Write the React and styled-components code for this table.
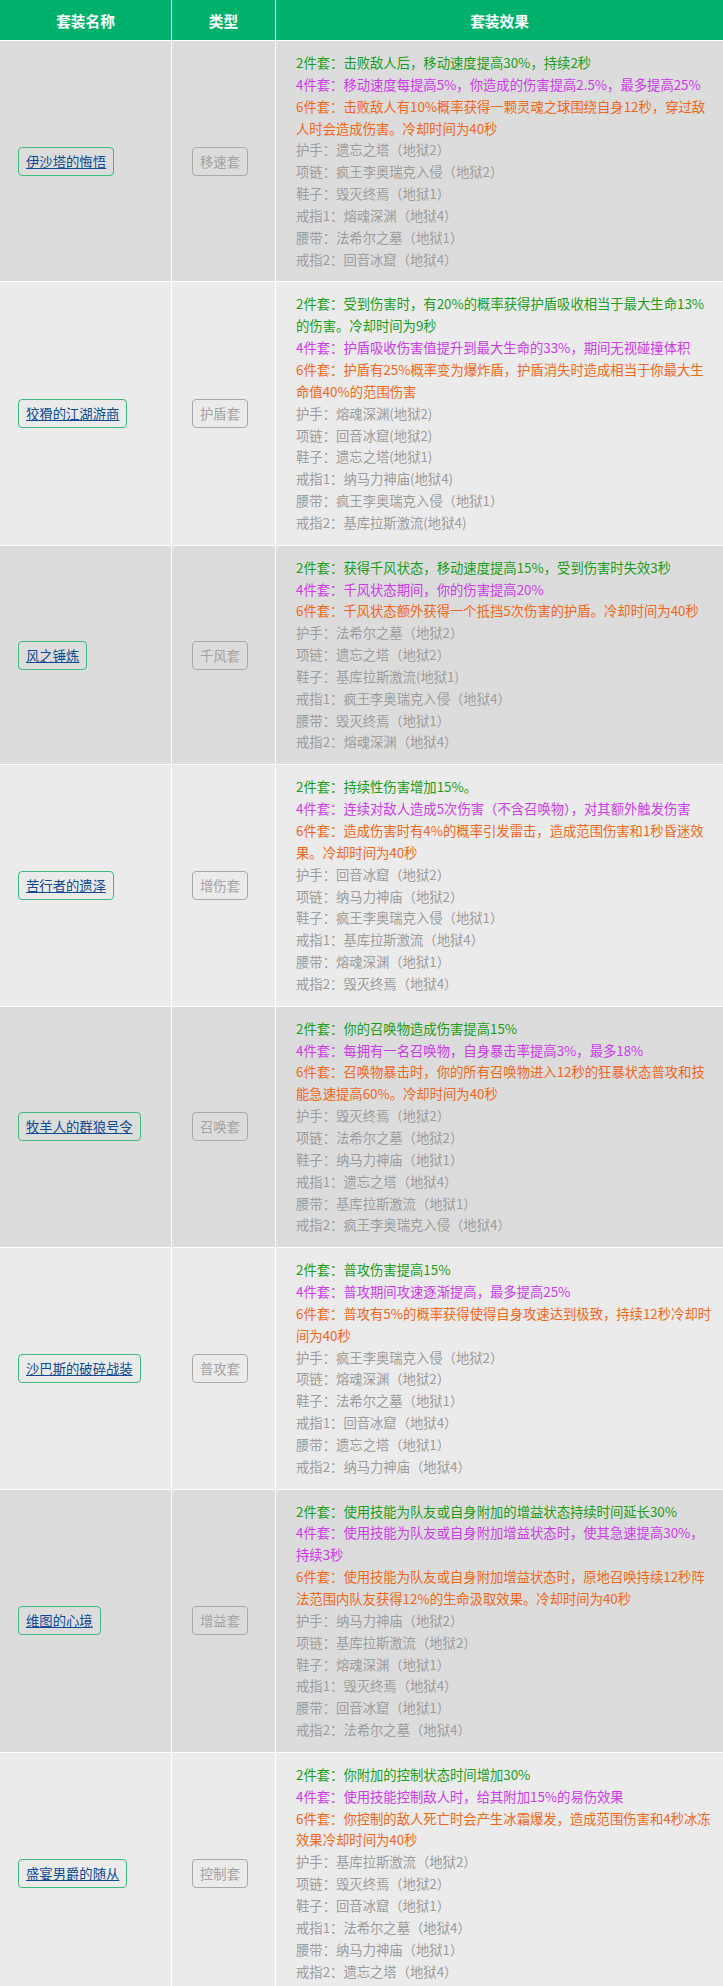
import React from "react";
import styled, { createGlobalStyle } from "styled-components";

const GlobalStyle = createGlobalStyle`
  html, body { margin: 0; padding: 0; background: #ffffff; }
  body {
    font-family: "Noto Sans CJK SC", "Microsoft YaHei", "Noto Sans", sans-serif;
    font-size: 13.33px;
  }
`;

const Table = styled.div`
  width: 723px;
  display: flex;
  flex-direction: column;
  gap: 1px;
  background: #ffffff;
`;

const RowGrid = styled.div`
  display: grid;
  grid-template-columns: 171px 103px 1fr;
  column-gap: 1px;
  background: #ffffff;
`;

const HeadCell = styled.div`
  height: 40px;
  background: #00b16b;
  color: #ffffff;
  font-weight: 700;
  font-size: 14.67px;
  display: flex;
  align-items: center;
  justify-content: center;
`;

const Cell = styled.div`
  background: ${(p) => (p.$alt ? "#ebebeb" : "#dcdcdc")};
  display: flex;
  align-items: center;
  padding: 0 ${(p) => p.$padX || 18}px;
`;

const NameLink = styled.a`
  display: inline-block;
  border: 1px solid #3dba7d;
  border-radius: 4px;
  padding: 3px 7px;
  line-height: 21px;
  font-size: 13.33px;
  color: #0d4a94;
  text-decoration: underline;
  white-space: nowrap;
  cursor: pointer;
`;

const TypeBadge = styled.span`
  display: inline-block;
  border: 1px solid #a9a9a9;
  border-radius: 4px;
  padding: 3px 7px;
  line-height: 21px;
  font-size: 13.33px;
  color: #a3a3a3;
  white-space: nowrap;
`;

const EffectCell = styled.div`
  background: ${(p) => (p.$alt ? "#ebebeb" : "#dcdcdc")};
  padding: 11px 11px 11px 20px;
  font-size: 13.33px;
  line-height: 21.85px;
`;

const tierColors = {
  2: "#1a9e1a",
  4: "#cc3aea",
  6: "#f0671a",
};

const EffectLine = styled.p`
  margin: 0;
  color: ${(p) => tierColors[p.$tier]};
`;

const GearLine = styled.p`
  margin: 0;
  color: #9c9c9c;
`;

const sets = [
  {
    name: "伊沙塔的悔悟",
    type: "移速套",
    effects: [
      "击败敌人后，移动速度提高30%，持续2秒",
      "移动速度每提高5%，你造成的伤害提高2.5%，最多提高25%",
      "击败敌人有10%概率获得一颗灵魂之球围绕自身12秒，穿过敌人时会造成伤害。冷却时间为40秒",
    ],
    gear: [
      "护手：遗忘之塔（地狱2）",
      "项链：疯王李奥瑞克入侵（地狱2）",
      "鞋子：毁灭终焉（地狱1）",
      "戒指1：熔魂深渊（地狱4）",
      "腰带：法希尔之墓（地狱1）",
      "戒指2：回音冰窟（地狱4）",
    ],
  },
  {
    name: "狡猾的江湖游商",
    type: "护盾套",
    effects: [
      "受到伤害时，有20%的概率获得护盾吸收相当于最大生命13%的伤害。冷却时间为9秒",
      "护盾吸收伤害值提升到最大生命的33%，期间无视碰撞体积",
      "护盾有25%概率变为爆炸盾，护盾消失时造成相当于你最大生命值40%的范围伤害",
    ],
    gear: [
      "护手：熔魂深渊(地狱2)",
      "项链：回音冰窟(地狱2)",
      "鞋子：遗忘之塔(地狱1)",
      "戒指1：纳马力神庙(地狱4)",
      "腰带：疯王李奥瑞克入侵（地狱1）",
      "戒指2：基库拉斯激流(地狱4)",
    ],
  },
  {
    name: "风之锤炼",
    type: "千风套",
    effects: [
      "获得千风状态，移动速度提高15%，受到伤害时失效3秒",
      "千风状态期间，你的伤害提高20%",
      "千风状态额外获得一个抵挡5次伤害的护盾。冷却时间为40秒",
    ],
    gear: [
      "护手：法希尔之墓（地狱2）",
      "项链：遗忘之塔（地狱2）",
      "鞋子：基库拉斯激流(地狱1)",
      "戒指1：疯王李奥瑞克入侵（地狱4）",
      "腰带：毁灭终焉（地狱1）",
      "戒指2：熔魂深渊（地狱4）",
    ],
  },
  {
    name: "苦行者的遗泽",
    type: "增伤套",
    effects: [
      "持续性伤害增加15%。",
      "连续对敌人造成5次伤害（不含召唤物），对其额外触发伤害",
      "造成伤害时有4%的概率引发雷击，造成范围伤害和1秒昏迷效果。冷却时间为40秒",
    ],
    gear: [
      "护手：回音冰窟（地狱2）",
      "项链：纳马力神庙（地狱2）",
      "鞋子：疯王李奥瑞克入侵（地狱1）",
      "戒指1：基库拉斯激流（地狱4）",
      "腰带：熔魂深渊（地狱1）",
      "戒指2：毁灭终焉（地狱4）",
    ],
  },
  {
    name: "牧羊人的群狼号令",
    type: "召唤套",
    effects: [
      "你的召唤物造成伤害提高15%",
      "每拥有一名召唤物，自身暴击率提高3%，最多18%",
      "召唤物暴击时，你的所有召唤物进入12秒的狂暴状态普攻和技能急速提高60%。冷却时间为40秒",
    ],
    gear: [
      "护手：毁灭终焉（地狱2）",
      "项链：法希尔之墓（地狱2）",
      "鞋子：纳马力神庙（地狱1）",
      "戒指1：遗忘之塔（地狱4）",
      "腰带：基库拉斯激流（地狱1）",
      "戒指2：疯王李奥瑞克入侵（地狱4）",
    ],
  },
  {
    name: "沙巴斯的破碎战装",
    type: "普攻套",
    effects: [
      "普攻伤害提高15%",
      "普攻期间攻速逐渐提高，最多提高25%",
      "普攻有5%的概率获得使得自身攻速达到极致，持续12秒冷却时间为40秒",
    ],
    gear: [
      "护手：疯王李奥瑞克入侵（地狱2）",
      "项链：熔魂深渊（地狱2）",
      "鞋子：法希尔之墓（地狱1）",
      "戒指1：回音冰窟（地狱4）",
      "腰带：遗忘之塔（地狱1）",
      "戒指2：纳马力神庙（地狱4）",
    ],
  },
  {
    name: "维图的心境",
    type: "增益套",
    effects: [
      "使用技能为队友或自身附加的增益状态持续时间延长30%",
      "使用技能为队友或自身附加增益状态时，使其急速提高30%，持续3秒",
      "使用技能为队友或自身附加增益状态时，原地召唤持续12秒阵法范围内队友获得12%的生命汲取效果。冷却时间为40秒",
    ],
    gear: [
      "护手：纳马力神庙（地狱2）",
      "项链：基库拉斯激流（地狱2）",
      "鞋子：熔魂深渊（地狱1）",
      "戒指1：毁灭终焉（地狱4）",
      "腰带：回音冰窟（地狱1）",
      "戒指2：法希尔之墓（地狱4）",
    ],
  },
  {
    name: "盛宴男爵的随从",
    type: "控制套",
    effects: [
      "你附加的控制状态时间增加30%",
      "使用技能控制敌人时，给其附加15%的易伤效果",
      "你控制的敌人死亡时会产生冰霜爆发，造成范围伤害和4秒冰冻效果冷却时间为40秒",
    ],
    gear: [
      "护手：基库拉斯激流（地狱2）",
      "项链：毁灭终焉（地狱2）",
      "鞋子：回音冰窟（地狱1）",
      "戒指1：法希尔之墓（地狱4）",
      "腰带：纳马力神庙（地狱1）",
      "戒指2：遗忘之塔（地狱4）",
    ],
  },
];

const tiers = [2, 4, 6];

export default function App() {
  return (
    <>
      <GlobalStyle />
      <Table>
        <RowGrid>
          <HeadCell>套装名称</HeadCell>
          <HeadCell>类型</HeadCell>
          <HeadCell>套装效果</HeadCell>
        </RowGrid>
        {sets.map((s, i) => {
          const alt = i % 2 === 1;
          return (
            <RowGrid key={s.name}>
              <Cell $alt={alt} $padX={18}>
                <NameLink>{s.name}</NameLink>
              </Cell>
              <Cell $alt={alt} $padX={20}>
                <TypeBadge>{s.type}</TypeBadge>
              </Cell>
              <EffectCell $alt={alt}>
                {s.effects.map((e, k) => (
                  <EffectLine key={k} $tier={tiers[k]}>
                    {tiers[k]}件套：{e}
                  </EffectLine>
                ))}
                {s.gear.map((g) => (
                  <GearLine key={g}>{g}</GearLine>
                ))}
              </EffectCell>
            </RowGrid>
          );
        })}
      </Table>
    </>
  );
}
